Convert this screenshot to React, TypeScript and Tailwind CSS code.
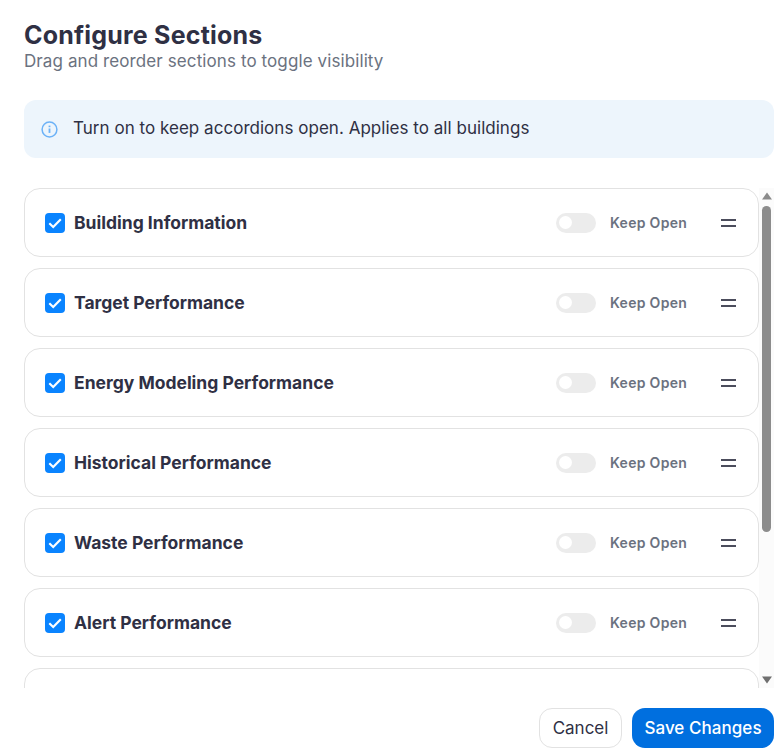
import React from "react";

const rows = [
  "Building Information",
  "Target Performance",
  "Energy Modeling Performance",
  "Historical Performance",
  "Waste Performance",
  "Alert Performance",
];

function Row({ label }: { label: string }) {
  return (
    <div className="flex h-[69px] shrink-0 items-center rounded-[16px] border border-[#e2e2e2] bg-white pl-[20px] pr-[22px]">
      <span className="flex h-5 w-5 items-center justify-center rounded-[4px] bg-[#0a84ff]">
        <svg width="16" height="16" viewBox="0 0 16 16" fill="none">
          <path d="M2.3 8.3 6.2 12 13.8 4.2" stroke="white" strokeWidth="2.2" />
        </svg>
      </span>
      <span className="ml-[9px] pt-[2px] text-[17.5px] font-bold text-[#2f3044]">{label}</span>
      <span className="ml-auto flex h-5 w-10 items-center rounded-full bg-[#ececec] pl-[3px]">
        <span className="h-[13px] w-[13px] rounded-full bg-white" />
      </span>
      <span className="ml-[14px] w-[77px] whitespace-nowrap text-[14px] font-semibold tracking-[0.3px] text-[#6b7280]">Keep Open</span>
      <span className="ml-[34px] flex w-[15px] flex-col gap-[4px]">
        <span className="h-[2px] bg-[#4b4d5c]" />
        <span className="h-[2px] bg-[#4b4d5c]" />
      </span>
    </div>
  );
}

export default function App() {
  return (
    <div className="flex h-[756px] w-[784px] flex-col overflow-hidden bg-white pl-6 pr-[10px] pt-[21px] font-['Inter','Noto_Sans',sans-serif]">
      <h1 className="text-[25px] font-bold leading-[28px] tracking-[0.2px] text-[#2f3044]">Configure Sections</h1>
      <p className="text-[17px] leading-[24px] tracking-[0.1px] text-[#6b7280]">Drag and reorder sections to toggle visibility</p>
      <div className="mt-[27px] flex h-[58px] items-center rounded-xl bg-[#edf5fc] pl-[17px]">
        <svg width="17" height="17" viewBox="0 0 17 17" fill="none" stroke="#6cb2f7" strokeWidth="1.5">
          <circle cx="8.5" cy="8.5" r="7.4" />
          <path d="M8.5 7.5v4.4" strokeWidth="1.8" />
          <path d="M8.5 4.6v1.6" strokeWidth="1.8" />
        </svg>
        <span className="ml-[15px] text-[17px] tracking-[0.03px] text-[#2f3044]">Turn on to keep accordions open. Applies to all buildings</span>
      </div>
      <div className="mt-[30px] flex h-[500px] shrink-0">
        <div className="flex w-[735px] flex-col gap-[11px] overflow-hidden">
          {rows.map((r) => (
            <Row key={r} label={r} />
          ))}
          <div className="h-[69px] shrink-0 rounded-[16px] border border-[#e2e2e2] bg-white" />
        </div>
        <div className="flex w-[15px] flex-col items-center bg-[#fbfbfb]">
          <svg className="mt-[4px]" width="10" height="8" viewBox="0 0 10 8">
            <path d="M5 .5 10 7.5H0z" fill="#8a8a8a" />
          </svg>
          <div className="mt-[6px] h-[326px] w-[9px] rounded-full bg-[#8c8c8c]" />
          <svg className="mt-auto mb-[4px]" width="10" height="8" viewBox="0 0 10 8">
            <path d="M5 7.5 0 .5h10z" fill="#6f6f6f" />
          </svg>
        </div>
      </div>
      <div className="mt-[20px] flex justify-end gap-[10px]">
        <button className="h-10 w-[83px] rounded-[13px] border border-[#e2e2e2] bg-white pt-[2px] text-[17px] text-[#2f3044]">Cancel</button>
        <button className="h-10 w-[142px] rounded-[13px] bg-[#006fdf] pt-[2px] text-[17px] font-medium tracking-[0.05px] text-white">Save Changes</button>
      </div>
    </div>
  );
}
